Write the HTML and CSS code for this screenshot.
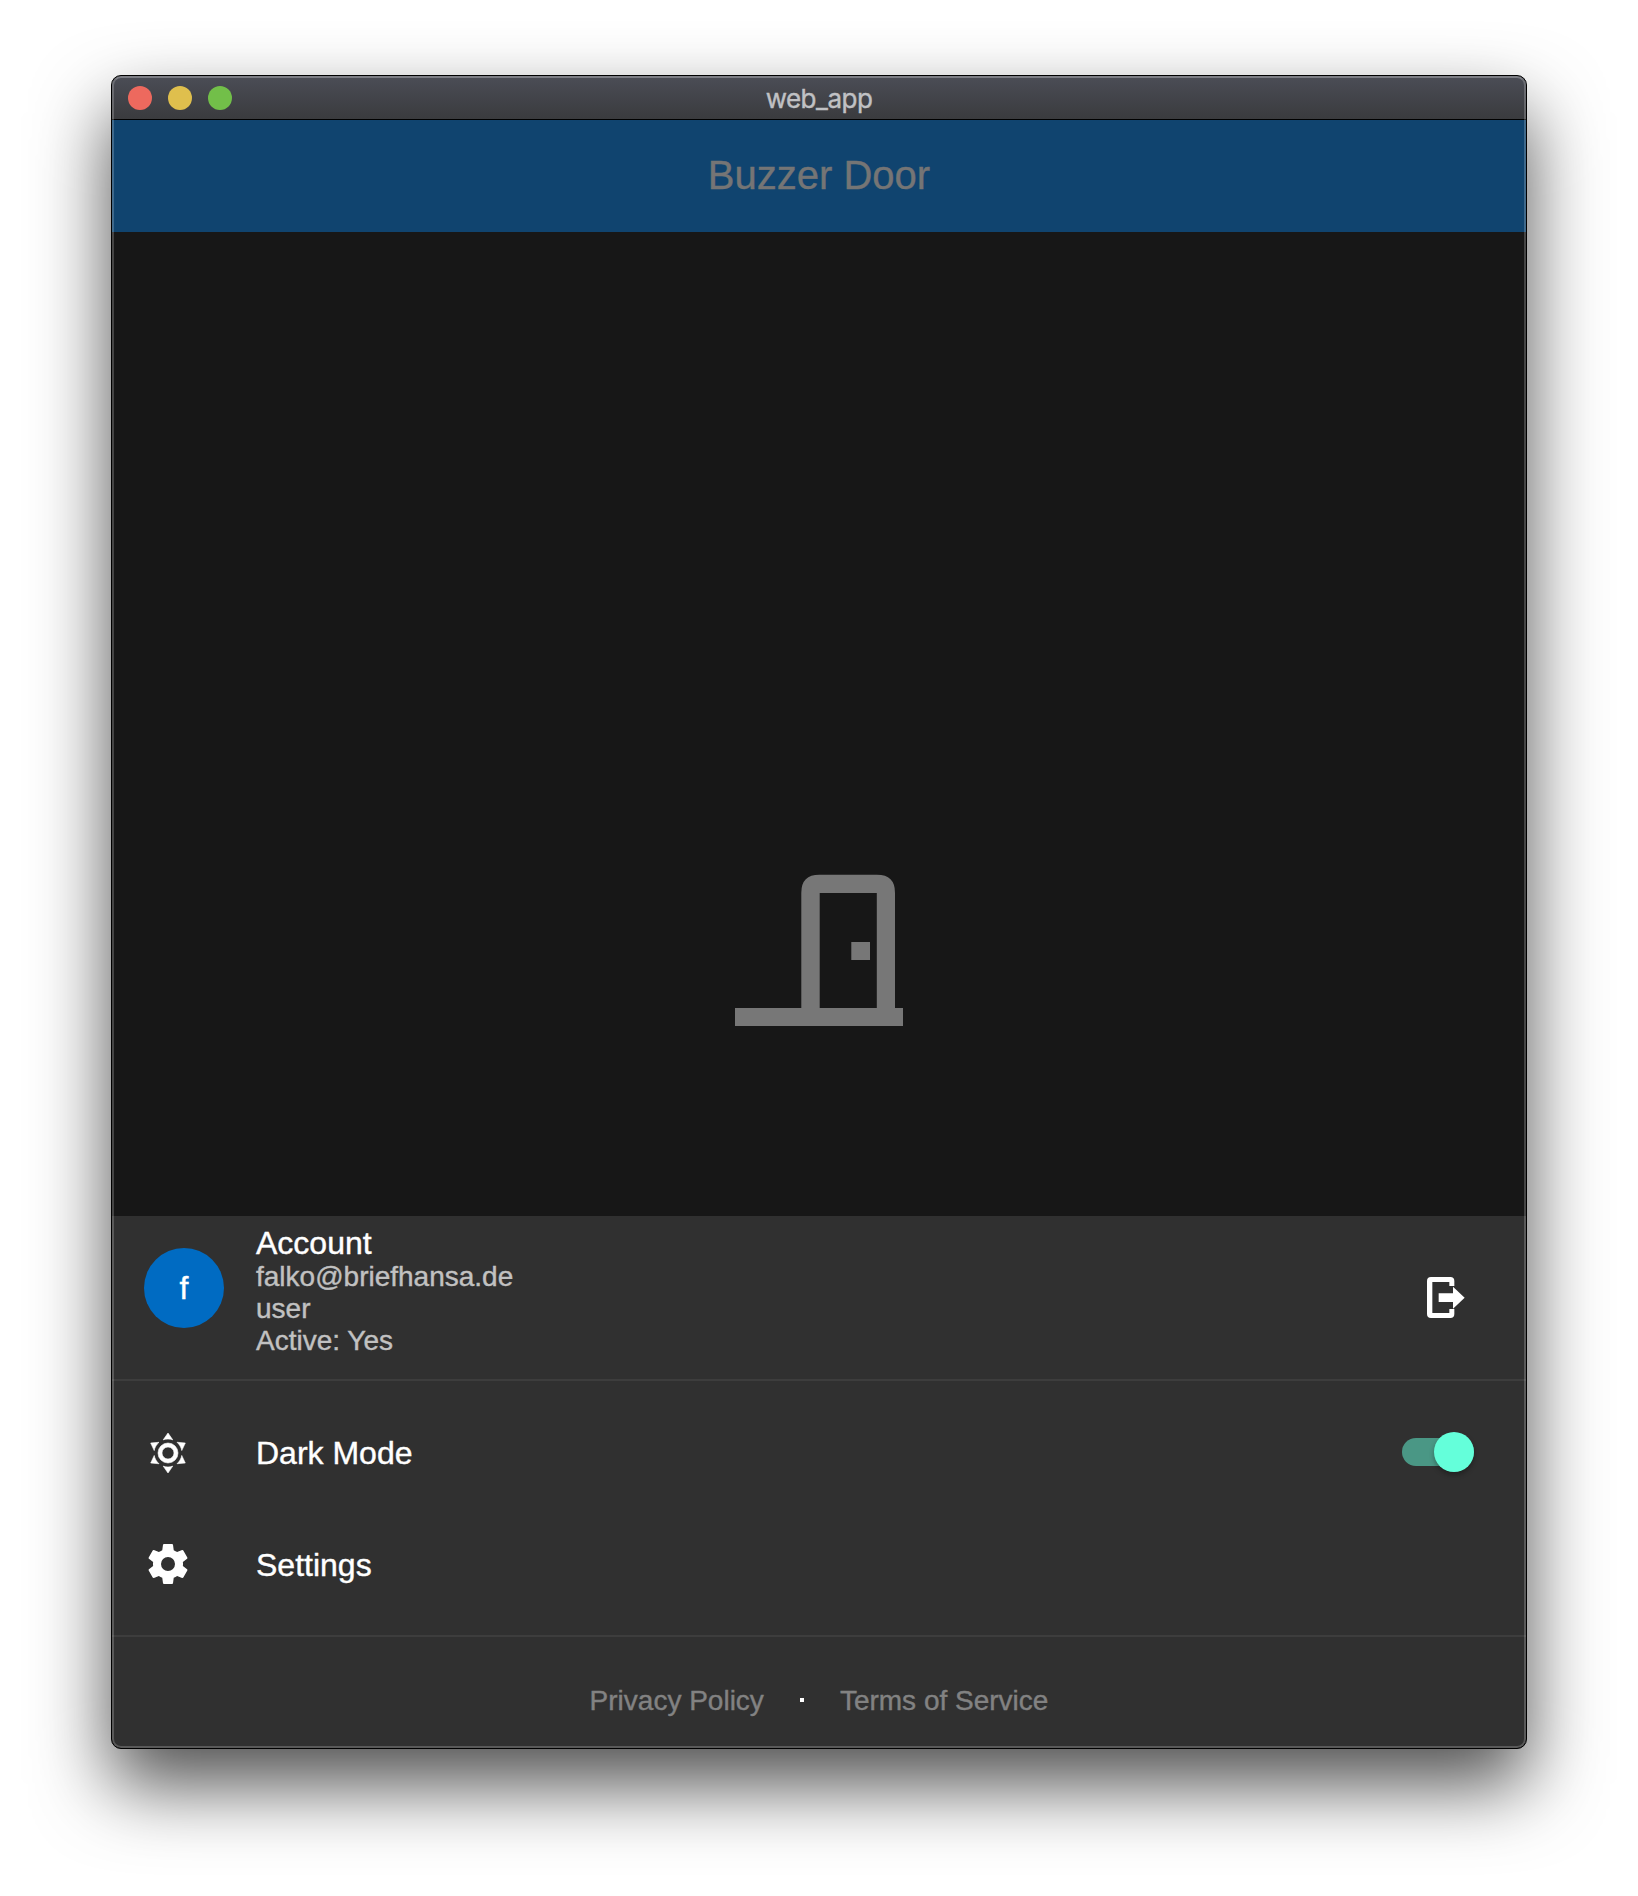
FILE: index.html
```html
<!DOCTYPE html>
<html lang="en">
<head>
<meta charset="utf-8">
<title>web_app</title>
<link rel="stylesheet" href="styles.css">
</head>
<body>
<div class="window">
  <header class="titlebar">
    <div class="lights">
      <span class="light close"></span>
      <span class="light minimize"></span>
      <span class="light maximize"></span>
    </div>
    <span class="window-title">web_app</span>
  </header>
  <div class="appbar">Buzzer Door</div>
  <main class="stage">
    <svg class="door" viewBox="0 0 168 152" aria-hidden="true">
      <path fill-rule="evenodd" d="M0 134H66.3V18.7Q66.3 .8 84.3 .8H142Q160 .8 160 18.7V134H168V152H0ZM84.7 19V134H141.8V19ZM116.3 68H135V86H116.3Z"/>
    </svg>
  </main>
  <section class="sheet">
    <div class="account">
      <div class="avatar">f</div>
      <div class="details">
        <div class="label">Account</div>
        <div class="sub">falko@briefhansa.de</div>
        <div class="sub">user</div>
        <div class="sub">Active: Yes</div>
      </div>
      <svg class="logout" viewBox="0 0 114 123" aria-hidden="true">
        <path d="M12 0H70Q82 0 82 12V27H67V15H16V108H67V96H82V111Q82 123 70 123H12Q0 123 0 111V12Q0 0 12 0Z"/>
        <path d="M35 49H78V29L113 62L78 95V75H35Z"/>
      </svg>
    </div>
    <div class="options">
      <div class="row">
        <svg class="icon sun" viewBox="0 0 24 24" aria-hidden="true"><path d="M12,7A5,5 0 0,1 17,12A5,5 0 0,1 12,17A5,5 0 0,1 7,12A5,5 0 0,1 12,7M12,9A3,3 0 0,0 9,12A3,3 0 0,0 12,15A3,3 0 0,0 15,12A3,3 0 0,0 12,9M12,2L14.39,5.42C13.65,5.15 12.84,5 12,5C11.16,5 10.35,5.15 9.61,5.42L12,2M3.34,7L7.5,6.65C6.9,7.16 6.36,7.78 5.94,8.5C5.5,9.24 5.25,10 5.11,10.79L3.34,7M3.36,17L5.12,13.23C5.26,14 5.53,14.78 5.95,15.5C6.37,16.24 6.91,16.86 7.5,17.37L3.36,17M20.65,7L18.88,10.79C18.74,10 18.47,9.23 18.05,8.5C17.63,7.78 17.1,7.15 16.5,6.64L20.65,7M20.64,17L16.5,17.36C17.09,16.85 17.62,16.22 18.04,15.5C18.46,14.77 18.73,14 18.87,13.21L20.64,17M12,22L9.59,18.56C10.33,18.83 11.14,19 12,19C12.82,19 13.63,18.83 14.37,18.56L12,22Z"/></svg>
        <span class="label">Dark Mode</span>
        <span class="switch"><span class="knob"></span></span>
      </div>
      <div class="row">
        <svg class="icon gear" viewBox="0 0 24 24" aria-hidden="true"><path d="M12,15.5A3.5,3.5 0 0,1 8.5,12A3.5,3.5 0 0,1 12,8.5A3.5,3.5 0 0,1 15.5,12A3.5,3.5 0 0,1 12,15.5M19.43,12.97C19.47,12.65 19.5,12.33 19.5,12C19.5,11.67 19.47,11.34 19.43,11L21.54,9.37C21.73,9.22 21.78,8.95 21.66,8.73L19.66,5.27C19.54,5.05 19.27,4.96 19.05,5.05L16.56,6.05C16.04,5.66 15.5,5.32 14.87,5.07L14.5,2.42C14.46,2.18 14.25,2 14,2H10C9.75,2 9.54,2.18 9.5,2.42L9.13,5.07C8.5,5.32 7.96,5.66 7.44,6.05L4.95,5.05C4.73,4.96 4.46,5.05 4.34,5.27L2.34,8.73C2.21,8.95 2.27,9.22 2.46,9.37L4.57,11C4.53,11.34 4.5,11.67 4.5,12C4.5,12.33 4.53,12.65 4.57,12.97L2.46,14.63C2.27,14.78 2.21,15.05 2.34,15.27L4.34,18.73C4.46,18.95 4.73,19.03 4.95,18.95L7.44,17.94C7.96,18.34 8.5,18.68 9.13,18.93L9.5,21.58C9.54,21.82 9.75,22 10,22H14C14.25,22 14.46,21.82 14.5,21.58L14.87,18.93C15.5,18.67 16.04,18.34 16.56,17.94L19.05,18.95C19.27,19.03 19.54,18.95 19.66,18.73L21.66,15.27C21.78,15.05 21.73,14.78 21.54,14.63L19.43,12.97Z"/></svg>
        <span class="label">Settings</span>
      </div>
    </div>
    <footer class="legal">
      <span>Privacy Policy</span>
      <span class="dot"></span>
      <span>Terms of Service</span>
    </footer>
  </section>
</div>
</body>
</html>
```
FILE: styles.css
```css
* { box-sizing: border-box; }

body {
  margin: 0;
  height: 1896px;
  padding: 75px 111px 0;
  overflow: hidden;
  background: #fff;
  font-family: "Liberation Sans", Arial, sans-serif;
  -webkit-text-stroke: .4px;
}

.window {
  position: relative;
  display: flex;
  flex-direction: column;
  height: 1674px;
  border: 1px solid #000;
  border-radius: 10px;
  overflow: hidden;
  background: #303030;
  box-shadow: 0 36px 76px rgba(0, 0, 0, .69);
}

/* light rim drawn over the window content */
.window::after {
  content: "";
  position: absolute;
  inset: 0;
  border: 2px solid rgba(255, 255, 255, .2);
  border-top-color: rgba(255, 255, 255, .28);
  border-radius: 9px;
  pointer-events: none;
}

.titlebar {
  display: grid;
  grid-template-columns: 1fr auto 1fr;
  align-items: center;
  height: 44px;
  padding: 0 16px;
  border-bottom: 1px solid #000;
  background: linear-gradient(#4b4d56, #3a3b3e);
}

.lights { display: flex; gap: 16px; }
.light { width: 24px; height: 24px; border-radius: 50%; }
.close { background: #ed695e; }
.minimize { background: #dfbf4d; }
.maximize { background: #72bf49; }

.window-title {
  padding-top: 2px;
  font: 26px/32px Inter, sans-serif;
  letter-spacing: -.5px;
  color: #c0c1c4;
}

.appbar {
  height: 112px;
  line-height: 110px;
  text-align: center;
  font-size: 40px;
  color: #757575;
  background: #10446f;
}

.stage {
  display: flex;
  justify-content: center;
  align-items: flex-end;
  height: 984px;
  padding-bottom: 190px;
  background: #171717;
}
.door { width: 168px; height: 152px; fill: #777; }

.sheet { flex: 1; color: #fff; }

.account {
  display: flex;
  height: 165px;
  padding: 9px 61px 0 32px;
  border-bottom: 2px solid #3d3d3d;
}
.avatar {
  width: 80px;
  height: 80px;
  margin: 23px 32px 0 0;
  border-radius: 50%;
  background: #006bc2;
  font-size: 32px;
  line-height: 81px;
  text-align: center;
}
.details { flex: 1; }
.label { font-size: 32px; line-height: 36px; }
.details .label { height: 36px; }
.sub { font-size: 28px; line-height: 32px; color: #c1c1c1; }
.logout { width: 38px; height: 41px; margin-top: 52px; fill: #fff; }

.options {
  height: 256px;
  padding-top: 16px;
  border-bottom: 2px solid #3d3d3d;
}
.row {
  display: flex;
  align-items: center;
  height: 112px;
  padding: 0 52px 0 32px;
}
.icon { width: 48px; height: 48px; margin-right: 64px; fill: #fff; }
.sun { stroke: #fff; stroke-width: .3; }
.gear { margin-bottom: 2px; }

.switch {
  display: flex;
  justify-content: flex-end;
  align-items: center;
  width: 72px;
  height: 28px;
  margin: 0 0 2px auto;
  border-radius: 14px;
  background: #4a9785;
}
.knob {
  width: 40px;
  height: 40px;
  margin: -6px 0;
  border-radius: 50%;
  background: #64ffda;
  box-shadow: 0 3px 5px rgba(0, 0, 0, .3);
}

.legal {
  display: flex;
  justify-content: center;
  align-items: center;
  gap: 36px;
  height: 111px;
  padding-top: 16px;
  font-size: 28px;
  line-height: 32px;
  color: #828282;
}
.dot { width: 4px; height: 4px; margin-bottom: 2px; background: #fff; }
```
